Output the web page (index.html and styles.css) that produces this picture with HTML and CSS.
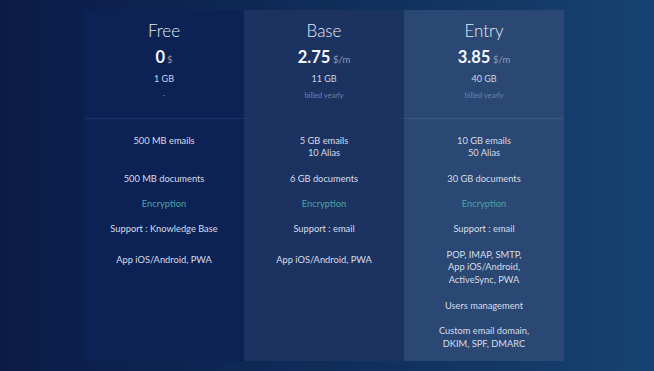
FILE: index.html
```html
<!DOCTYPE html>
<html lang="en">
<head>
<meta charset="utf-8">
<title>Pricing</title>
<link rel="stylesheet" href="styles.css">
</head>
<body>
<main class="page">
  <section class="pricing">
    <article class="plan plan-free">
      <header class="plan-head">
        <h2 class="plan-name">Free</h2>
        <p class="plan-price"><span class="amount">0</span><span class="unit unit-tight">$</span></p>
        <p class="plan-storage">1 GB</p>
        <p class="plan-note">-</p>
      </header>
      <p class="feat feat-first">500 MB emails</p>
      <p class="feat">500 MB documents</p>
      <p class="feat feat-accent">Encryption</p>
      <p class="feat">Support : Knowledge Base</p>
      <p class="feat feat-offset">App iOS/Android, PWA</p>
      <p class="feat"></p>
      <p class="feat"></p>
    </article>
    <article class="plan plan-base">
      <header class="plan-head">
        <h2 class="plan-name">Base</h2>
        <p class="plan-price"><span class="amount">2.75</span> <span class="unit">$/m</span></p>
        <p class="plan-storage">11 GB</p>
        <p class="plan-note">billed yearly</p>
      </header>
      <p class="feat feat-first">5 GB emails<br>10 Alias</p>
      <p class="feat">6 GB documents</p>
      <p class="feat feat-accent">Encryption</p>
      <p class="feat">Support : email</p>
      <p class="feat feat-offset">App iOS/Android, PWA</p>
      <p class="feat"></p>
      <p class="feat"></p>
    </article>
    <article class="plan plan-entry">
      <header class="plan-head">
        <h2 class="plan-name">Entry</h2>
        <p class="plan-price"><span class="amount">3.85</span> <span class="unit">$/m</span></p>
        <p class="plan-storage">40 GB</p>
        <p class="plan-note">billed yearly</p>
      </header>
      <p class="feat feat-first">10 GB emails<br>50 Alias</p>
      <p class="feat">30 GB documents</p>
      <p class="feat feat-accent">Encryption</p>
      <p class="feat">Support : email</p>
      <p class="feat">POP, IMAP, SMTP,<br>App iOS/Android,<br>ActiveSync, PWA</p>
      <p class="feat">Users management</p>
      <p class="feat feat-last">Custom email domain,<br>DKIM, SPF, DMARC</p>
    </article>
  </section>
</main>
</body>
</html>
```

FILE: styles.css
```css
* { box-sizing: border-box; }

html, body {
  margin: 0;
  padding: 0;
  height: 100%;
}

body {
  background: linear-gradient(90deg, #0b1b47 0%, #0e2755 35%, #12335f 65%, #164372 100%);
  font-family: Lato, "Open Sans", "Liberation Sans", sans-serif;
  color: #d9e0ec;
  overflow: hidden;
}

.page {
  padding: 10px 0 0 84px;
}

.pricing {
  display: grid;
  grid-template-columns: repeat(3, 160px);
  grid-template-rows: repeat(8, auto);
}

.plan {
  grid-row: span 8;
  display: grid;
  grid-template-rows: subgrid;
  text-align: center;
}

.plan-free { background: #0c2254; }
.plan-base { background: #1c3361; }
.plan-entry { background: #2a4873; }

.plan-head {
  height: 109px;
  padding: 11px 0 0;
  border-bottom: 1px solid #17306a;
}
.plan-base .plan-head { border-bottom-color: #1f3766; }
.plan-entry .plan-head { border-bottom-color: #37577f; }

.plan-name {
  margin: 0;
  font-size: 17px;
  line-height: 20px;
  font-weight: 300;
  color: #e6ebf4;
}

.plan-price {
  margin: 7px 0 0;
  height: 22px;
  font-size: 10px;
  line-height: 22px;
  color: #f4f6fa;
}

.amount {
  font-size: 16.5px;
  line-height: 1;
  font-weight: 700;
}

.unit {
  font-size: 9.5px;
  line-height: 1;
  color: #8c9cbb;
}

.unit-tight { margin-left: 2px; }

.plan-storage {
  margin: 3px 0 0;
  font-size: 9px;
  line-height: 12px;
  color: #cdd5e4;
}

.plan-note {
  margin: 5px 0 0;
  font-size: 7.5px;
  line-height: 12px;
  color: #6f82a6;
}

.feat {
  margin: 0;
  padding: 0 0 12.7px;
  font-size: 9.3px;
  line-height: 12.7px;
  color: #d6dde9;
}

.feat-first { padding-top: 15.5px; }
.feat-accent { color: #48a5a8; }
.feat-offset { padding-top: 5px; }
.feat-last { padding-bottom: 10.5px; }
```
